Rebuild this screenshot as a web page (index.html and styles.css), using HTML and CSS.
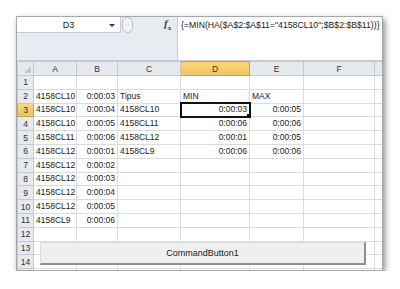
FILE: index.html
```html
<!DOCTYPE html>
<html lang="en">
<head>
  <meta charset="UTF-8" />
  <title>Excel - MIN(HA)</title>
  <link rel="stylesheet" href="styles.css">
</head>
<body>
  <div class="frame">
    <div class="formula-bar">
      <div class="bar-left">
        <div class="name-row">
          <div class="name-box">D3<span class="arrow"></span></div>
          <div class="grip">&middot;&middot;&middot;</div>
          <div class="fx"><i>f</i><sub>x</sub></div>
        </div>
      </div>
      <div class="formula">{=MIN(HA($A$2:$A$11="4158CL10";$B$2:$B$11))}</div>
    </div>

    <table class="sheet">
      <colgroup>
        <col class="c-rh"><col class="c-a"><col class="c-b"><col class="c-c"><col class="c-d"><col class="c-e"><col class="c-f"><col class="c-g">
      </colgroup>
      <tr class="head">
        <th class="corner"><span class="tri"></span></th><th>A</th><th>B</th><th>C</th><th class="sel">D</th><th>E</th><th>F</th><th></th>
      </tr>
      <tr><th>1</th><td></td><td></td><td></td><td></td><td></td><td></td><td></td></tr>
      <tr><th>2</th><td>4158CL10</td><td class="num">0:00:03</td><td>Tipus</td><td>MIN</td><td>MAX</td><td></td><td></td></tr>
      <tr><th class="sel">3</th><td>4158CL10</td><td class="num">0:00:04</td><td>4158CL10</td><td class="num active">0:00:03<span class="handle"></span></td><td class="num">0:00:05</td><td></td><td></td></tr>
      <tr><th>4</th><td>4158CL10</td><td class="num">0:00:05</td><td>4158CL11</td><td class="num">0:00:06</td><td class="num">0:00:06</td><td></td><td></td></tr>
      <tr><th>5</th><td>4158CL11</td><td class="num">0:00:06</td><td>4158CL12</td><td class="num">0:00:01</td><td class="num">0:00:05</td><td></td><td></td></tr>
      <tr><th>6</th><td>4158CL12</td><td class="num">0:00:01</td><td>4158CL9</td><td class="num">0:00:06</td><td class="num">0:00:06</td><td></td><td></td></tr>
      <tr><th>7</th><td>4158CL12</td><td class="num">0:00:02</td><td></td><td></td><td></td><td></td><td></td></tr>
      <tr><th>8</th><td>4158CL12</td><td class="num">0:00:03</td><td></td><td></td><td></td><td></td><td></td></tr>
      <tr><th>9</th><td>4158CL12</td><td class="num">0:00:04</td><td></td><td></td><td></td><td></td><td></td></tr>
      <tr><th>10</th><td>4158CL12</td><td class="num">0:00:05</td><td></td><td></td><td></td><td></td><td></td></tr>
      <tr><th>11</th><td>4158CL9</td><td class="num">0:00:06</td><td></td><td></td><td></td><td></td><td></td></tr>
      <tr><th>12</th><td></td><td></td><td></td><td></td><td></td><td></td><td></td></tr>
      <tr><th>13</th><td></td><td></td><td></td><td></td><td></td><td></td><td></td></tr>
      <tr><th>14</th><td></td><td></td><td></td><td></td><td></td><td></td><td></td></tr>
      <tr class="last"><th></th><td></td><td></td><td></td><td></td><td></td><td></td><td></td></tr>
    </table>

    <button class="cmd">CommandButton1</button>
  </div>
</body>
</html>
```

FILE: styles.css
```css
body { margin: 0; background: #fff; font-family: "Liberation Sans", Arial, sans-serif; color: #222; }
.frame { position: relative; margin: 16px 0 0 16px; width: 365px; height: 253px; border: 1px solid #a4a8ad; overflow: hidden; background: #fff; box-shadow: 2px 3px 6px rgba(0,0,0,0.45); }

.formula-bar { display: flex; height: 43px; background: #e8ebef; border-bottom: 1px solid #c7ccd3; }
.bar-left { width: 160px; }
.name-row { display: flex; align-items: center; height: 16px; }
.name-box { position: relative; width: 104px; height: 16px; background: #fff; border-right: 1px solid #c7ccd3; border-bottom: 1px solid #c7ccd3; box-sizing: border-box; text-align: center; font-size: 9px; line-height: 16px; }
.arrow { position: absolute; right: 5px; top: 7px; border-left: 3px solid transparent; border-right: 3px solid transparent; border-top: 3px solid #333; }
.grip { width: 9px; height: 14px; margin-left: 1px; border: 1px solid #b9bec6; border-radius: 8px; background: #f2f4f7; font-size: 5px; line-height: 12px; text-align: center; color: #9aa0a8; overflow: hidden; }
.fx { margin-left: 31px; font-family: "Liberation Serif", serif; font-size: 11px; font-weight: bold; color: #444; }
.fx sub { font-size: 7px; }
.formula { flex: 1; background: #fff; border-left: 1px solid #c7ccd3; padding: 3px 0 0 3px; font-size: 8.7px; white-space: nowrap; overflow: hidden; }

.sheet { border-collapse: collapse; table-layout: fixed; width: 365px; font-size: 8.5px; }
.c-rh { width: 16px; } .c-a { width: 43px; } .c-b { width: 41px; } .c-c { width: 63px; }
.c-d { width: 69px; } .c-e { width: 54px; } .c-f { width: 71px; } .c-g { width: 8px; }
.sheet tr { height: 13.8px; }
.sheet tr.head { height: 14px; }
.sheet th { background: #e6e9ed; border: 1px solid #c4c9d0; font-weight: normal; color: #333; padding: 0; text-align: center; }
.sheet td { border: 1px solid #dcdcdc; padding: 0 2px; white-space: nowrap; overflow: hidden; line-height: 11px; }
.sheet td.num { text-align: right; }
.sheet th.sel { background: linear-gradient(#f9d97a, #f1c15a); border-color: #c9a24a; }
.sheet td.active { position: relative; outline: 2px solid #111; outline-offset: -1px; }
.handle { position: absolute; right: -3px; bottom: -3px; width: 4px; height: 4px; background: #111; border: 1px solid #fff; }
.corner { position: relative; }
.tri { position: absolute; right: 2px; bottom: 2px; border-left: 7px solid transparent; border-bottom: 7px solid #c2c7ce; }

.cmd { position: absolute; left: 23px; top: 225px; width: 326px; height: 23px; background: #efefef; border: 1px solid #dcdcdc; border-right: 2px solid #8e8e8e; border-bottom: 2px solid #8e8e8e; font-family: "Liberation Sans", Arial, sans-serif; font-size: 9px; color: #222; padding: 0; }
```
